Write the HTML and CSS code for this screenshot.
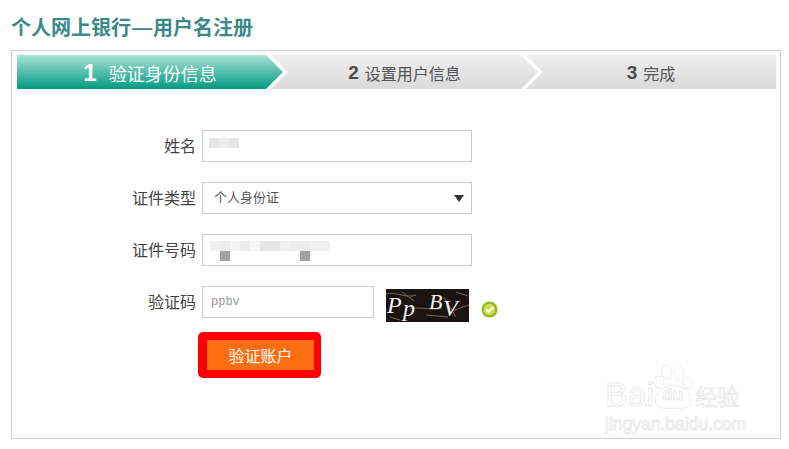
FILE: index.html
```html
<!DOCTYPE html>
<html lang="zh-CN">
<head>
<meta charset="utf-8">
<title>个人网上银行—用户名注册</title>
<link rel="stylesheet" href="styles.css">
</head>
<body>
<h1 class="title">个人网上银行<span class="dash">—</span>用户名注册</h1>
<main class="panel">
  <ol class="steps">
    <li class="step step-1 active"><b>1</b><span>验证身份信息</span></li>
    <li class="step step-2"><b>2</b><span>设置用户信息</span></li>
    <li class="step step-3"><b>3</b><span>完成</span></li>
  </ol>
  <form class="form">
    <div class="row">
      <label class="label">姓名</label>
      <div class="field name-field">
        <i class="px s2"></i><i class="px s3"></i><i class="px s2"></i>
      </div>
    </div>
    <div class="row">
      <label class="label">证件类型</label>
      <div class="field select-field"><span>个人身份证</span><i class="caret"></i></div>
    </div>
    <div class="row">
      <label class="label">证件号码</label>
      <div class="field id-field">
        <div class="px-line">
          <i class="px s4"></i><i class="px s3"></i><i class="px s5"></i><i class="px s3"></i><i class="px s5"></i><i class="px s2"></i><i class="px s2"></i><i class="px s4"></i><i class="px s3"></i><i class="px s3"></i><i class="px s4"></i><i class="px s4"></i>
        </div>
        <div class="px-line dark-line"><i class="px dark"></i><i class="px dark second"></i></div>
      </div>
    </div>
    <div class="row captcha-row">
      <label class="label">验证码</label>
      <div class="field code-field">ppbv</div>
      <svg class="captcha" width="83" height="33" viewBox="0 0 83 33" aria-label="验证码图片">
        <rect width="83" height="33" fill="#1b1311"/>
        <g fill="none" stroke="#6e655c" stroke-width="1">
          <path d="M0 5C10 2 20 10 30 6"/>
          <path d="M16 3L28 12"/>
          <path d="M24 20C36 17 44 22 56 19"/>
          <path d="M40 26L62 28"/>
          <path d="M58 8L70 28"/>
          <path d="M66 22L83 16"/>
          <path d="M4 28L14 31"/>
          <path d="M70 3L82 7"/>
        </g>
        <g fill="#f2efe8" font-family="Liberation Serif, serif" font-style="italic">
          <text x="1" y="24" font-size="24">P</text>
          <text x="17" y="27" font-size="24">p</text>
          <text x="43" y="20" font-size="22">B</text>
          <text x="57" y="27" font-size="24">V</text>
        </g>
      </svg>
      <svg class="check" width="17" height="17" viewBox="0 0 17 17" aria-hidden="true">
        <circle cx="8.5" cy="8.5" r="8" fill="#8fb81c"/>
        <circle cx="8.5" cy="8.5" r="5.8" fill="#cfe04a"/>
        <path d="M5 8.5L7.6 11L12.2 6" fill="none" stroke="#fff" stroke-width="2.2"/>
      </svg>
    </div>
    <div class="actions">
      <button class="submit" type="button">验证账户</button>
    </div>
  </form>
  <div class="watermark" aria-hidden="true">
    <div class="wm-top">
      <span class="wm-bai">Bai</span>
      <span class="wm-paw">
        <svg width="42" height="46" viewBox="0 0 42 46">
          <g fill="none" stroke="#ebebeb" stroke-width="1">
            <ellipse cx="6" cy="18" rx="5" ry="6"/>
            <ellipse cx="14" cy="8" rx="5" ry="7"/>
            <ellipse cx="26" cy="9" rx="5" ry="7"/>
            <ellipse cx="35" cy="19" rx="5" ry="6"/>
            <path d="M20 21C12 21 2 29 2 36C2 45 12 45 20 44C28 45 38 45 38 36C38 29 28 21 20 21Z"/>
          </g>
        </svg>
        <em>du</em>
      </span>
      <span class="wm-jy">经验</span>
    </div>
    <div class="wm-url">jingyan.baidu.com</div>
  </div>
</main>
</body>
</html>
```

FILE: styles.css
```css
* { box-sizing: border-box; }
html, body { margin: 0; padding: 0; }
body {
  width: 789px;
  height: 449px;
  overflow: hidden;
  background: #fff;
  font-family: "Noto Sans CJK SC", "Liberation Sans", sans-serif;
  color: #444;
}
.title {
  margin: 0;
  padding: 13px 0 0 11px;
  height: 50px;
  font-size: 20px;
  line-height: 28px;
  font-weight: 700;
  color: #3c8a88;
  white-space: nowrap;
}
.dash {
  display: inline-block;
  width: 22px;
  text-align: center;
  transform: scaleX(1.25);
}
.panel {
  position: relative;
  width: 770px;
  height: 389px;
  margin-left: 11px;
  padding: 4px 4px 0 5px;
  border: 1px solid #cfcfcf;
}
.steps {
  display: flex;
  width: 759px;
  height: 34px;
  margin: 0;
  padding: 0;
  list-style: none;
}
.step {
  display: flex;
  align-items: center;
  justify-content: center;
  height: 34px;
  padding-top: 2px;
  color: #555;
  font-size: 16px;
  background: linear-gradient(#efefef, #dadada);
}
.step b {
  font-family: "Liberation Sans", sans-serif;
  font-size: 19px;
  font-weight: 700;
  color: #4a4a4a;
  margin-right: 6px;
}
.step-1 {
  width: 266px;
  clip-path: polygon(0 0, 249px 0, 100% 50%, 249px 100%, 0 100%);
  background: linear-gradient(#a8e2d6, #039a82);
  color: #fff;
  font-size: 18px;
}
.step-1 b {
  font-size: 24px;
  color: #fff;
  margin-right: 12px;
}
.step-2 {
  width: 267px;
  margin-left: -12px;
  clip-path: polygon(0 0, 250px 0, 100% 50%, 250px 100%, 0 100%, 17px 50%);
}
.step-3 {
  width: 250px;
  margin-left: -12px;
  clip-path: polygon(0 0, 100% 0, 100% 100%, 0 100%, 17px 50%);
}
.form {
  padding: 41px 0 0 0;
  display: flex;
  flex-direction: column;
}
.row {
  display: flex;
  align-items: center;
  height: 32px;
  margin-bottom: 20px;
}
.label {
  width: 185px;
  padding: 0 6px 2px 0;
  text-align: right;
  font-size: 16px;
  color: #444;
}
.field {
  width: 270px;
  height: 32px;
  border: 1px solid #cccccc;
  background: #fff;
  flex: none;
}
.name-field {
  display: flex;
  padding: 7px 0 0 6px;
}
.px {
  display: block;
  flex: none;
  width: 10px;
  height: 10px;
}
.s2 { background: #e6e6e6; }
.s3 { background: #ededed; }
.s4 { background: #f0f0f0; }
.s5 { background: #f6f6f6; }
.select-field {
  display: flex;
  align-items: center;
  justify-content: space-between;
  padding: 0 7px 3px 11px;
  font-size: 13px;
  color: #555;
}
.caret {
  width: 0;
  height: 0;
  margin-top: 3px;
  border-left: 5px solid transparent;
  border-right: 5px solid transparent;
  border-top: 7px solid #333;
}
.id-field { padding: 6px 0 0 7px; }
.px-line { display: flex; }
.dark-line { padding-left: 10px; }
.dark { background: #a2a2a2; }
.second { margin-left: 70px; }
.code-field {
  width: 172px;
  padding-left: 8px;
  font-family: "Liberation Mono", monospace;
  font-size: 12px;
  line-height: 31px;
  color: #999;
}
.captcha-row { margin-bottom: 14px; }
.captcha {
  display: block;
  flex: none;
  margin: 7px 0 0 12px;
}
.check {
  display: block;
  flex: none;
  margin: 14px 0 0 12px;
}
.actions { padding-left: 181px; }
.submit {
  display: block;
  width: 123px;
  height: 46px;
  padding: 0;
  border-style: solid;
  border-color: #ff0000;
  border-width: 8px 7px 8px 9px;
  border-radius: 5px;
  background: #ff6f12;
  color: #fff;
  font-family: inherit;
  font-size: 16px;
}
.watermark {
  position: absolute;
  left: 593px;
  top: 313px;
  width: 150px;
  color: #fff;
  -webkit-text-stroke: 1px #ebebeb;
}
.wm-top {
  display: flex;
  align-items: flex-end;
  height: 46px;
}
.wm-bai {
  flex: none;
  width: 48px;
  font-family: "Liberation Sans", sans-serif;
  font-size: 34px;
  line-height: 32px;
}
.wm-paw {
  position: relative;
  display: block;
  flex: none;
  width: 42px;
  height: 46px;
}
.wm-paw svg { display: block; }
.wm-paw em {
  position: absolute;
  left: 9px;
  bottom: 6px;
  font: 700 17px/18px "Liberation Sans", sans-serif;
}
.wm-jy {
  flex: none;
  font-size: 22px;
  line-height: 30px;
  white-space: nowrap;
}
.wm-url {
  margin-top: 3px;
  font-family: "Liberation Sans", sans-serif;
  font-size: 17.5px;
  line-height: 22px;
  white-space: nowrap;
}
```
